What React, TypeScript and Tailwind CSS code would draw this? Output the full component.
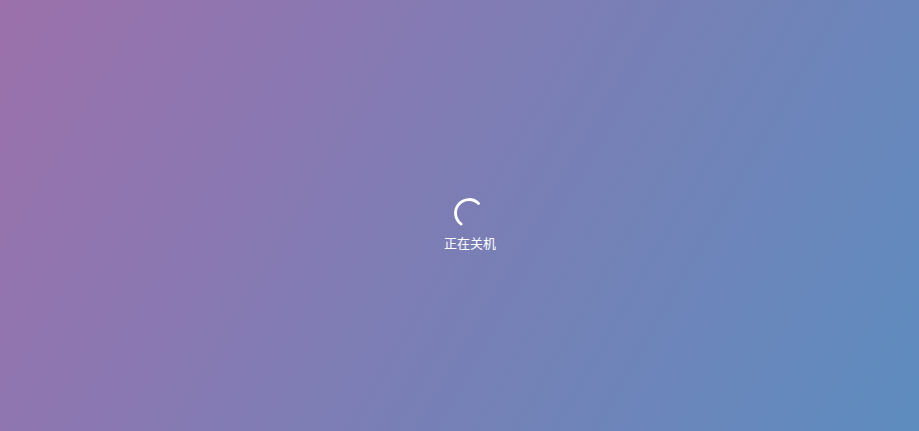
export default function App() {
  return (
    <div className="w-[919px] h-[431px] overflow-hidden bg-[linear-gradient(120deg,#9c71ab_0%,#8a78b2_30%,#787fb5_55%,#5d8cbf_100%)] flex flex-col items-center justify-center">
      <div className="flex flex-col items-center mt-[18px] ml-[21px]">
        <svg width="32" height="32" viewBox="0 0 32 32" className="ml-[-2px]">
          <path d="M25.55 6.45 A13.5 13.5 0 1 0 8.26 27.06" fill="none" stroke="white" strokeWidth="2.8" strokeLinecap="round" />
        </svg>
        <div className="mt-[5px] text-[13px] leading-[18px] text-white font-['Noto_Sans_CJK_SC',sans-serif]">正在关机</div>
      </div>
    </div>
  );
}
